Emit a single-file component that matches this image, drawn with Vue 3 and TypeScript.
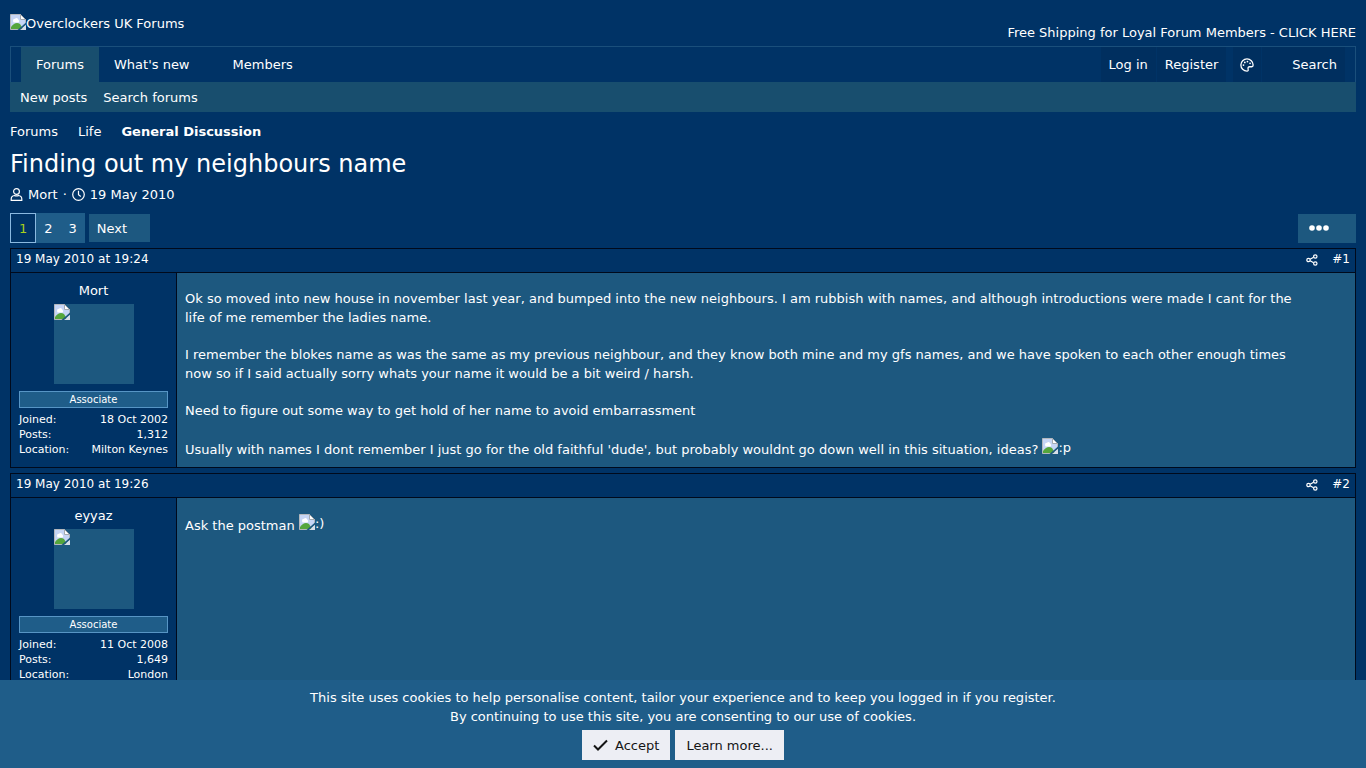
<script setup lang="ts">
import { defineComponent, h } from 'vue'

interface Post {
  id: number
  date: string
  author: string
  joined: string
  posts: string
  location: string
  paragraphs: string[]
  smiley: string
}

const posts: Post[] = [
  {
    id: 1,
    date: '19 May 2010 at 19:24',
    author: 'Mort',
    joined: '18 Oct 2002',
    posts: '1,312',
    location: 'Milton Keynes',
    paragraphs: [
      'Ok so moved into new house in november last year, and bumped into the new neighbours. I am rubbish with names, and although introductions were made I cant for the life of me remember the ladies name.',
      'I remember the blokes name as was the same as my previous neighbour, and they know both mine and my gfs names, and we have spoken to each other enough times now so if I said actually sorry whats your name it would be a bit weird / harsh.',
      'Need to figure out some way to get hold of her name to avoid embarrassment',
      "Usually with names I dont remember I just go for the old faithful 'dude', but probably wouldnt go down well in this situation, ideas?",
    ],
    smiley: ':p',
  },
  {
    id: 2,
    date: '19 May 2010 at 19:26',
    author: 'eyyaz',
    joined: '11 Oct 2008',
    posts: '1,649',
    location: 'London',
    paragraphs: ['Ask the postman'],
    smiley: ':)',
  },
]

const MissingImage = defineComponent({
  render: () =>
    h('svg', { width: 16, height: 16, viewBox: '0 0 16 16', 'aria-hidden': 'true' }, [
      h('path', { d: 'M0.5 0.5h10l5 5v10h-15z', fill: '#c6d5f5', stroke: '#b4b8bd' }),
      h('path', { d: 'M3 7a2 2 0 0 1 2-2.2A2 2 0 0 1 8.500 6 1.500 1.500 0 0 1 8.500 8.500H3.500z', fill: '#fff' }),
      h('path', { d: 'M1 15v-2c3-4 6-5 9-3l3 5z', fill: '#55a63c' }),
      h('path', { d: 'M10.500 0.500v5h5z', fill: '#fff', stroke: '#a5aab0' }),
      h('path', { d: 'M16 8.500L7.500 16H10L16 10.800z', fill: '#1d587f' }),
      h('path', { d: 'M16 11l-5.500 5H16z', fill: '#d8dee8' }),
    ]),
})
</script>

<template>
  <div class="page">
    <header class="top">
      <a href="#" class="logo"><MissingImage /><span>Overclockers UK Forums</span></a>
      <a href="#" class="promo">Free Shipping for Loyal Forum Members - CLICK HERE</a>
    </header>

    <nav class="nav" aria-label="Main">
      <div class="links">
        <a href="#" class="tab active">Forums</a>
        <a href="#" class="tab wide">What's new</a>
        <a href="#" class="tab">Members</a>
      </div>
      <div class="account">
        <a href="#">Log in</a>
        <a href="#">Register</a>
        <a href="#" class="palette" aria-label="Style chooser">
          <svg width="14" height="14" viewBox="0 0 16 16" fill="none" stroke="#fff" stroke-width="1.5">
            <path d="M8 1a7 7 0 1 0 0 14c1.300 0 1.700-1 1.300-2.200C8.800 11 9.500 10 11 10h2.500c1 0 1.500-.8 1.500-2A7 7 0 0 0 8 1z" />
            <g fill="#fff" stroke="none">
              <circle cx="4" cy="8" r="1" /><circle cx="5.500" cy="5" r="1" /><circle cx="8.500" cy="4" r="1" /><circle cx="11.500" cy="6" r="1" />
            </g>
          </svg>
        </a>
        <a href="#" class="search">Search</a>
      </div>
    </nav>
    <nav class="subnav" aria-label="Section">
      <a href="#">New posts</a>
      <a href="#">Search forums</a>
    </nav>

    <nav class="crumbs" aria-label="Breadcrumb">
      <a href="#">Forums</a>
      <a href="#">Life</a>
      <a href="#" class="current">General Discussion</a>
    </nav>

    <h1>Finding out my neighbours name</h1>
    <div class="meta">
      <svg width="13" height="13" viewBox="0 0 13 13" fill="none" stroke="#fff" stroke-width="1.200">
        <circle cx="6.500" cy="3.500" r="2.900" />
        <path d="M4.500 7.500C2.300 7.800 1.200 9 1.200 11v1.300h10.600V11c0-2-1.100-3.200-3.300-3.500-1.300.6-2.700.6-4 0z" />
      </svg>
      <a href="#">Mort</a>
      <span>·</span>
      <svg width="13" height="13" viewBox="0 0 13 13" fill="none" stroke="#fff" stroke-width="1.200">
        <circle cx="6.500" cy="6.500" r="5.800" />
        <path d="M6.500 2.800v4l2.300 1.700" />
      </svg>
      <a href="#">19 May 2010</a>
    </div>

    <div class="tools">
      <nav class="pages" aria-label="Pages">
        <a href="#" class="on">1</a><a href="#">2</a><a href="#">3</a>
      </nav>
      <a href="#" class="next">Next</a>
      <button type="button" class="more" aria-label="More options">
        <svg width="20" height="6" viewBox="0 0 20 6" fill="#fff">
          <circle cx="3" cy="3" r="2.800" /><circle cx="10" cy="3" r="2.800" /><circle cx="17" cy="3" r="2.800" />
        </svg>
      </button>
    </div>

    <main>
      <article v-for="post in posts" :key="post.id" class="post">
        <header class="bar">
          <a href="#">{{ post.date }}</a>
          <span class="bar-right">
            <a href="#" class="share" aria-label="Share">
              <svg width="12" height="12" viewBox="0 0 12 12" fill="none" stroke="#fff" stroke-width="1.200">
                <circle cx="2.500" cy="6" r="1.700" /><circle cx="9.300" cy="2.500" r="1.700" /><circle cx="9.300" cy="9.500" r="1.700" />
                <path d="M4.100 5.200l3.500-1.900M4.100 6.800l3.500 1.900" />
              </svg>
            </a>
            <a href="#">#{{ post.id }}</a>
          </span>
        </header>
        <div class="body">
          <section class="user">
            <a href="#" class="name">{{ post.author }}</a>
            <a href="#" class="avatar" :aria-label="post.author"><MissingImage /></a>
            <div class="rank">Associate</div>
            <dl>
              <div><dt>Joined:</dt><dd>{{ post.joined }}</dd></div>
              <div><dt>Posts:</dt><dd>{{ post.posts }}</dd></div>
              <div><dt>Location:</dt><dd>{{ post.location }}</dd></div>
            </dl>
          </section>
          <div class="text">
            <p v-for="(text, i) in post.paragraphs" :key="i">
              {{ text }}
              <span v-if="i === post.paragraphs.length - 1" class="smiley"><MissingImage /><span>{{ post.smiley }}</span></span>
            </p>
          </div>
        </div>
      </article>
    </main>

    <aside class="cookies">
      <p>This site uses cookies to help personalise content, tailor your experience and to keep you logged in if you register.<br />By continuing to use this site, you are consenting to our use of cookies.</p>
      <div class="choices">
        <button type="button">
          <svg width="15" height="12" viewBox="0 0 15 12" fill="none" stroke="#141414" stroke-width="2"><path d="M1 6.500l4 4L14 1.500" /></svg>
          Accept
        </button>
        <a href="#">Learn more...</a>
      </div>
    </aside>
  </div>
</template>

<style>
body {
  margin: 0;
  background: #003366;
}
</style>

<style scoped>
.page {
  min-height: 100vh;
  box-sizing: border-box;
  padding: 0 10px;
  background: #003366;
  color: #fff;
  font: 13px/19px Verdana, "DejaVu Sans", sans-serif;
}
a {
  color: inherit;
  text-decoration: none;
}
svg {
  display: block;
  flex: none;
}
.top {
  display: flex;
  justify-content: space-between;
  align-items: flex-end;
  height: 46px;
}
.logo {
  display: flex;
  align-self: flex-start;
  margin-top: 14px;
}
.promo {
  margin-bottom: 4px;
}
.nav {
  display: flex;
  justify-content: space-between;
  border: 1px solid #1a4f7b;
  border-bottom: 0;
  padding: 0 10px;
  line-height: 35px;
}
.links,
.account {
  display: flex;
}
.account {
  gap: 1px;
}
.tab {
  padding: 0 15px;
}
.wide {
  padding-right: 28px;
}
.active {
  background: #184e6e;
}
.account a {
  padding: 0 8px;
  background: #002f5f;
}
.account .palette {
  display: flex;
  align-items: center;
  margin-left: 6px;
  padding: 0 7px;
}
.account .search {
  padding-left: 30px;
}
.subnav {
  display: flex;
  gap: 16px;
  padding: 2px 10px 0;
  background: #184e6e;
  line-height: 28px;
}
.crumbs {
  display: flex;
  gap: 20px;
  margin-top: 10px;
}
.current {
  font-weight: bold;
}
h1 {
  margin: 6px 0 0;
  font-size: 24px;
  font-weight: normal;
  line-height: 34px;
}
.meta {
  display: flex;
  align-items: center;
  gap: 5px;
  margin-top: 4px;
}
.tools {
  display: flex;
  align-items: center;
  margin-top: 9px;
  height: 30px;
}
.pages {
  display: flex;
  background: #1f5d89;
}
.pages a {
  padding: 1px 8px 0;
  line-height: 29px;
}
.pages .on {
  border: 1px solid #8ab9e0;
  background: #003366;
  color: #a8d01c;
  line-height: 27px;
}
.next {
  margin-left: 4px;
  padding: 1px 23px 0 8px;
  background: #1d5880;
  line-height: 27px;
}
.more {
  margin-left: auto;
  padding: 0 11px;
  width: 58px;
  height: 29px;
  border: 0;
  background: #1d587f;
}
.post {
  margin: 5px 0;
  border: 1px solid #000a1c;
}
.bar {
  display: flex;
  justify-content: space-between;
  padding: 1px 5px 3px;
  border-bottom: 1px solid #000a1c;
  font-size: 12px;
}
.bar-right {
  display: flex;
  align-items: center;
  gap: 14px;
}
.body {
  display: flex;
}
.user {
  width: 149px;
  flex: none;
  padding: 8px 8px 9px;
  border-right: 1px solid #000a1c;
}
.name {
  display: block;
  text-align: center;
}
.avatar {
  display: block;
  width: 80px;
  height: 80px;
  margin: 4px auto 7px;
  background: #1d587f;
}
.rank {
  border: 1px solid #5795c5;
  background: #1f5d89;
  font-size: 10px;
  line-height: 15px;
  text-align: center;
}
dl {
  margin: 4px 0 0;
  font-size: 11px;
  line-height: 15px;
}
dl div {
  display: flex;
  justify-content: space-between;
}
dd {
  margin: 0;
}
.text {
  flex: 1;
  padding: 16px 50px 8px 8px;
  background: #1d587f;
}
.text p {
  margin: 0 0 18px;
}
.text p:last-child {
  margin: 0;
}
.smiley {
  display: inline-flex;
}
.cookies {
  position: fixed;
  right: 0;
  bottom: 0;
  left: 0;
  padding: 8px 10px;
  background: #1f5d89;
  text-align: center;
}
.cookies p {
  margin: 0;
}
.choices {
  display: flex;
  justify-content: center;
  gap: 5px;
  margin-top: 4px;
}
.choices button,
.choices a {
  display: flex;
  align-items: center;
  gap: 7px;
  height: 30px;
  padding: 0 11px;
  border: 0;
  background: #edeef4;
  color: #141414;
  font: inherit;
}
</style>
